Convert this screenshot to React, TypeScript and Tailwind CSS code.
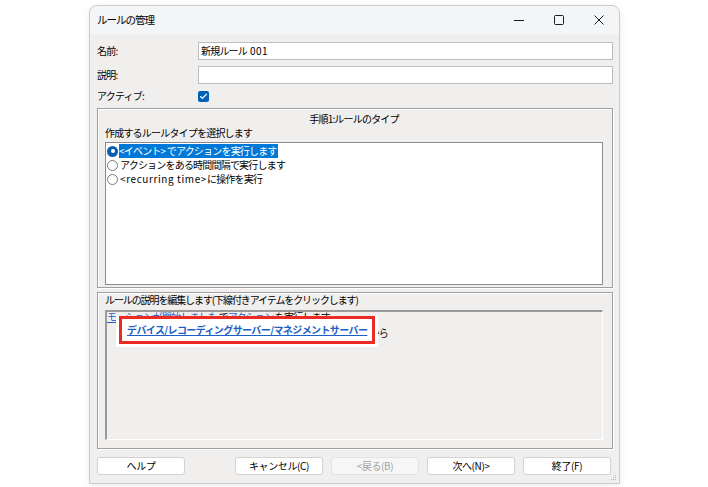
import { Check } from 'lucide-react';

const font = { fontFamily: '"Noto Sans CJK JP", "Noto Sans", sans-serif' };

function Radio({ on }: { on?: boolean }) {
  if (on) {
    return (
      <span className="flex h-[11px] w-[11px] shrink-0 items-center justify-center rounded-full bg-[#0b5cad]">
        <span className="h-[4px] w-[4px] rounded-full bg-white" />
      </span>
    );
  }
  return <span className="h-[11px] w-[11px] shrink-0 rounded-full border border-[#7a7a7a] bg-white" />;
}

function Btn({ label, disabled }: { label: string; disabled?: boolean }) {
  return (
    <div
      className={`flex h-[18px] w-[88px] items-center justify-center rounded-[3px] border text-[10px] tracking-[-0.4px] ${
        disabled ? 'border-[#e3e3e3] bg-[#f6f6f6] text-[#a3a3a3]' : 'border-[#d2d2d2] bg-white text-black'
      }`}
    >
      {label}
    </div>
  );
}

export default function App() {
  return (
    <div className="min-h-screen bg-white pl-[89px] pt-[5px] text-black" style={font}>
      <div className="relative flex h-[479px] w-[531px] flex-col rounded-t-[8px] border border-[#cbcbcb] bg-[#f0efed] shadow-[0_2px_8px_rgba(0,0,0,0.08)]">
        {/* title bar */}
        <div className="flex h-[28px] items-center justify-between rounded-t-[8px] bg-[#f4f5f7] pl-[7px]">
          <span className="text-[10.5px] tracking-[-1px]">ルールの管理</span>
          <div className="flex h-full">
            <div className="flex w-[40px] items-center justify-center">
              <svg width="10" height="10" viewBox="0 0 10 10"><path d="M0 5.5h10" stroke="#1c1c1c" strokeWidth="1" /></svg>
            </div>
            <div className="flex w-[40px] items-center justify-center">
              <svg width="10" height="10" viewBox="0 0 10 10"><rect x="0.5" y="0.5" width="9" height="9" rx="1" fill="none" stroke="#1c1c1c" strokeWidth="1" /></svg>
            </div>
            <div className="flex w-[40px] items-center justify-center">
              <svg width="10" height="10" viewBox="0 0 10 10"><path d="M0.5 0.5l9 9M9.5 0.5l-9 9" stroke="#1c1c1c" strokeWidth="1" /></svg>
            </div>
          </div>
        </div>

        <div className="flex flex-1 flex-col pl-[7px] pr-[6px] text-[10px] leading-[14px] tracking-[-0.8px]">
          {/* fields */}
          <div className="mt-[8px] flex h-[18px] items-center">
            <span className="w-[101px]">名前:</span>
            <div className="flex h-[18px] flex-1 items-center border border-[#bdbdbd] bg-white pl-[2px]">
              新規ルール <span className="ml-[3px] tracking-[0.4px]">001</span>
            </div>
          </div>
          <div className="mt-[6px] flex h-[18px] items-center">
            <span className="w-[101px]">説明:</span>
            <div className="h-[18px] flex-1 border border-[#bdbdbd] bg-white" />
          </div>
          <div className="mt-[4px] flex h-[16px] items-center">
            <span className="w-[101px]">アクティブ:</span>
            <span className="flex h-[11px] w-[11px] items-center justify-center rounded-[2px] bg-[#0063b8]">
              <Check className="h-[9px] w-[9px] text-white" strokeWidth={3} />
            </span>
          </div>

          {/* step 1 */}
          <div className="mt-[4px] flex h-[180px] flex-col border border-[#a0a0a0] pb-[2px] pl-[7px] pr-[9px] pt-[3px] shadow-[inset_1px_1px_0_#fff,1px_1px_0_#fff]">
            <div className="text-center">手順1:ルールのタイプ</div>
            <div>作成するルールタイプを選択します</div>
            <div className="mt-[2px] flex-1 border border-[#8c8c8c] bg-white pl-[1px] pt-[1px]">
              <div className="flex h-[14px] items-center">
                <Radio on />
                <span className="ml-[1px] bg-[#0078d7] pr-[1px] text-white">&lt;イベント&gt; でアクションを実行します</span>
              </div>
              <div className="flex h-[14px] items-center">
                <Radio />
                <span className="ml-[2px]">アクションをある時間間隔で実行します</span>
              </div>
              <div className="flex h-[14px] items-center">
                <Radio />
                <span className="ml-[2px]">
                  <span className="tracking-[0.6px]">&lt;recurring time&gt;</span>に操作を実行
                </span>
              </div>
            </div>
          </div>

          {/* rule description */}
          <div className="mt-[4px] flex h-[157px] flex-col border border-[#a0a0a0] pb-[8px] pl-[7px] pr-[9px] shadow-[inset_1px_1px_0_#fff,1px_1px_0_#fff]">
            <div className="tracking-[-1.1px]">ルールの説明を編集します(下線付きアイテムをクリックします)</div>
            <div className="relative mt-[3px] flex-1 border-b border-l-2 border-r border-t-2 border-b-white border-l-[#9a9a9a] border-r-white border-t-[#9a9a9a]">
              <div className="-mt-[2px] h-[14px]">
                <span className="text-[#1d5fc6] underline">モーションが開始しました</span>
                <span> で</span>
                <span className="text-[#1d5fc6] underline">アクション</span>
                <span> を実行します</span>
              </div>
              <div className="mt-[2px] h-[14px] pl-[26px]">
                <span className="text-[#1d5fc6] underline">デバイス/レコーディングサーバー/マネジメントサーバー</span>
                <span> から</span>
              </div>
              <div className="absolute left-[9px] top-[4px] bg-white px-[3px] pb-[3px]">
                <div className="border-[3px] border-[#ec2b24] px-[5px] py-[4px]">
                  <span className="text-[10px] font-bold leading-[14px] tracking-[-0.6px] text-[#1d5fc6] underline">
                    デバイス/レコーディングサーバー/マネジメントサーバー
                  </span>
                </div>
              </div>
            </div>
          </div>

          {/* buttons */}
          <div className="mt-[8px] flex">
            <Btn label="ヘルプ" />
            <div className="ml-[50px] flex gap-[8px]">
              <Btn label="キャンセル(C)" />
              <Btn label="<戻る(B)" disabled />
              <Btn label="次へ(N)>" />
              <Btn label="終了(F)" />
            </div>
          </div>
        </div>

        {/* size grip */}
        <svg className="absolute bottom-[2px] right-[2px]" width="8" height="8" viewBox="0 0 8 8">
          <rect x="6" y="2" width="1" height="1" fill="#b5b5b5" />
          <rect x="4" y="4" width="1" height="1" fill="#b5b5b5" />
          <rect x="6" y="4" width="1" height="1" fill="#b5b5b5" />
          <rect x="2" y="6" width="1" height="1" fill="#b5b5b5" />
          <rect x="4" y="6" width="1" height="1" fill="#b5b5b5" />
          <rect x="6" y="6" width="1" height="1" fill="#b5b5b5" />
        </svg>
      </div>
    </div>
  );
}
